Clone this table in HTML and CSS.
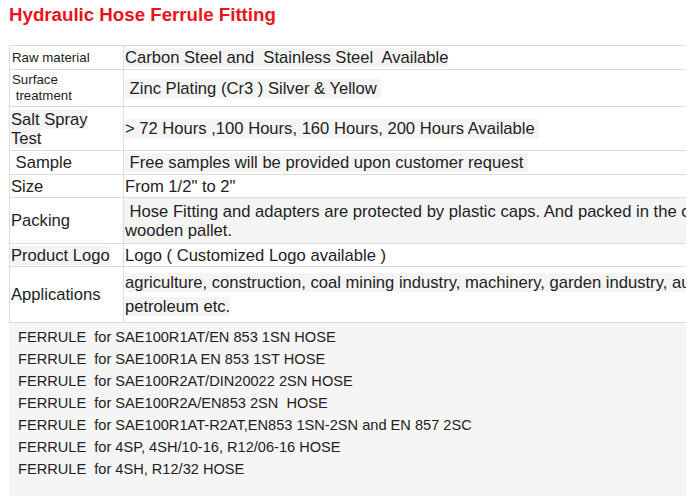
FILE: index.html
```html
<!DOCTYPE html>
<html>
<head>
<meta charset="utf-8">
<link rel="stylesheet" href="styles.css">
</head>
<body>
<div class="page">
  <h1 class="title">Hydraulic Hose Ferrule Fitting</h1>
  <div class="clip">
    <table class="spec">
      <tr class="r1">
        <td class="lbl small">Raw material</td>
        <td class="val"><span class="hl">Carbon Steel and&nbsp; Stainless Steel&nbsp; Available</span></td>
      </tr>
      <tr class="r2">
        <td class="lbl small">Surface<br>&nbsp;treatment</td>
        <td class="val"><span class="hl">&nbsp;Zinc Plating (Cr3 ) Silver &amp; Yellow&nbsp;</span></td>
      </tr>
      <tr class="r3">
        <td class="lbl"><span class="hl">Salt Spray<br>Test</span></td>
        <td class="val"><span class="hl">&gt; 72 Hours ,100 Hours, 160 Hours, 200 Hours Available&nbsp;</span></td>
      </tr>
      <tr class="r4">
        <td class="lbl">&nbsp;Sample</td>
        <td class="val"><span class="hl">&nbsp;Free samples will be provided upon customer request&nbsp;</span></td>
      </tr>
      <tr class="r5">
        <td class="lbl">Size</td>
        <td class="val">From 1/2" to 2"</td>
      </tr>
      <tr class="r6">
        <td class="lbl">Packing</td>
        <td class="val fill">&nbsp;Hose Fitting and adapters are protected by plastic caps. And packed in the carton or<br>wooden pallet.</td>
      </tr>
      <tr class="r7">
        <td class="lbl"><span class="hl">Product Logo</span></td>
        <td class="val">Logo ( Customized Logo available )</td>
      </tr>
      <tr class="r8">
        <td class="lbl">Applications</td>
        <td class="val loose"><span class="hl">agriculture, construction, coal mining industry, machinery, garden industry, automobile industry,<br>petroleum etc.</span></td>
      </tr>
    </table>
    <div class="models">
      <p>FERRULE&nbsp; for SAE100R1AT/EN 853 1SN HOSE</p>
      <p>FERRULE&nbsp; for SAE100R1A EN 853 1ST HOSE</p>
      <p>FERRULE&nbsp; for SAE100R2AT/DIN20022 2SN HOSE</p>
      <p>FERRULE&nbsp; for SAE100R2A/EN853 2SN&nbsp; HOSE</p>
      <p>FERRULE&nbsp; for SAE100R1AT-R2AT,EN853 1SN-2SN and EN 857 2SC</p>
      <p>FERRULE&nbsp; for 4SP, 4SH/10-16, R12/06-16 HOSE</p>
      <p>FERRULE&nbsp; for 4SH, R12/32 HOSE</p>
    </div>
  </div>
</div>
</body>
</html>
```
FILE: styles.css
```css
* { box-sizing: border-box; }
html, body {
  margin: 0;
  padding: 0;
  background: #ffffff;
}
body {
  font-family: "Liberation Sans", Arial, sans-serif;
  color: #222222;
}
.page {
  padding: 4px 0 0 9px;
}
.title {
  margin: 0 0 20px 0;
  font-size: 18.7px;
  line-height: 21px;
  font-weight: bold;
  color: #e8141c;
}
.clip {
  width: 677px;
  overflow: hidden;
}
.spec {
  border-collapse: collapse;
  width: 780px;
  table-layout: fixed;
  border-top: 1px solid #dcdcdc;
  border-left: 1px solid #dcdcdc;
}
.spec td {
  border-bottom: 1px solid #dcdcdc;
  border-right: 1px solid #dcdcdc;
  padding: 0 0 0 1px;
  vertical-align: middle;
  white-space: nowrap;
  font-size: 16.6px;
  line-height: 19px;
  overflow: hidden;
}
.spec td.lbl {
  width: 114px;
}
.spec td.small {
  font-size: 13.3px;
  line-height: 16px;
  padding-left: 2px;
}
.spec td.loose { line-height: 24px; }
.spec td.fill { background: #f4f4f4; }
.hl { background: #f4f4f4; }
.r1 td { height: 24px; }
.r2 td { height: 37px; }
.r3 td { height: 44px; }
.r4 td { height: 24px; }
.r5 td { height: 23px; }
.r6 td { height: 46px; }
.r7 td { height: 23px; }
.r8 td { height: 56px; }
.models {
  background: #f5f5f5;
  padding: 3px 0 16px 9px;
  font-size: 14.6px;
  line-height: 22px;
  color: #222222;
}
.models p {
  margin: 0;
  white-space: nowrap;
}
```
